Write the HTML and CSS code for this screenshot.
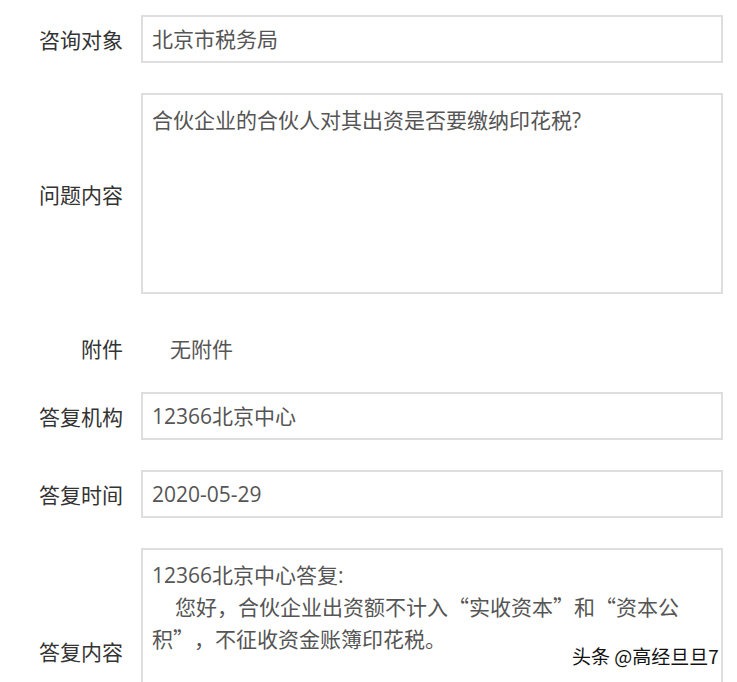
FILE: index.html
```html
<!DOCTYPE html>
<html lang="zh-CN">
<head>
    <meta charset="UTF-8">
    <meta name="viewport" content="width=device-width, initial-scale=1.0">
    <title>咨询详情</title>
    <link rel="stylesheet" href="styles.css">
</head>
<body>
    <main class="detail-form">
        <div class="form-row">
            <label class="form-label">咨询对象</label>
            <div class="form-field">北京市税务局</div>
        </div>
        <div class="form-row">
            <label class="form-label">问题内容</label>
            <div class="form-field form-area">合伙企业的合伙人对其出资是否要缴纳印花税?</div>
        </div>
        <div class="form-row attach-row">
            <label class="form-label">附件</label>
            <div class="attach-value">无附件</div>
        </div>
        <div class="form-row">
            <label class="form-label">答复机构</label>
            <div class="form-field">12366北京中心</div>
        </div>
        <div class="form-row">
            <label class="form-label">答复时间</label>
            <div class="form-field">2020-05-29</div>
        </div>
        <div class="form-row">
            <label class="form-label">答复内容</label>
            <div class="form-field form-area answer-area">12366北京中心答复:<br><span class="indent"></span>您好，合伙企业出资额不计入<span class="cjk">“</span>实收资本<span class="cjk">”</span>和<span class="cjk">“</span>资本公<br>积<span class="cjk">”</span>，不征收资金账簿印花税。</div>
        </div>
    </main>
    <div class="watermark">头条 @高经旦旦7</div>
</body>
</html>
```

FILE: styles.css
```css
body {
    margin: 0;
    padding: 0;
    background: #fff;
    font-family: "Open Sans", "Noto Sans CJK SC", sans-serif;
    color: #333;
    overflow: hidden;
    text-spacing-trim: space-all;
}
.detail-form {
    width: 723px;
    padding-top: 15px;
}
.form-row {
    display: flex;
    align-items: center;
    margin-bottom: 30px;
}
.form-label {
    width: 123px;
    flex-shrink: 0;
    padding-right: 18px;
    text-align: right;
    font-size: 21px;
    color: #333;
}
.form-field {
    box-sizing: border-box;
    width: 582px;
    height: 48px;
    border: 2px solid #dedede;
    padding: 0 9px;
    font-size: 21px;
    line-height: 44px;
    color: #555;
}
.form-area {
    height: 201px;
    padding: 10px 9px;
    line-height: 31px;
}
.answer-area {
    height: 205px;
}
.cjk {
    font-family: "Noto Sans CJK SC", sans-serif;
}
.indent {
    display: inline-block;
    width: 23px;
}
.attach-row {
    height: 48px;
    margin-bottom: 20px;
}
.attach-value {
    padding-left: 29px;
    font-size: 21px;
    color: #555;
}
.watermark {
    position: absolute;
    left: 572px;
    top: 642px;
    font-size: 19px;
    color: #111;
    text-shadow: 0 0 2px #fff, 0 0 2px #fff;
    font-family: "Noto Sans CJK SC", sans-serif;
}
```
